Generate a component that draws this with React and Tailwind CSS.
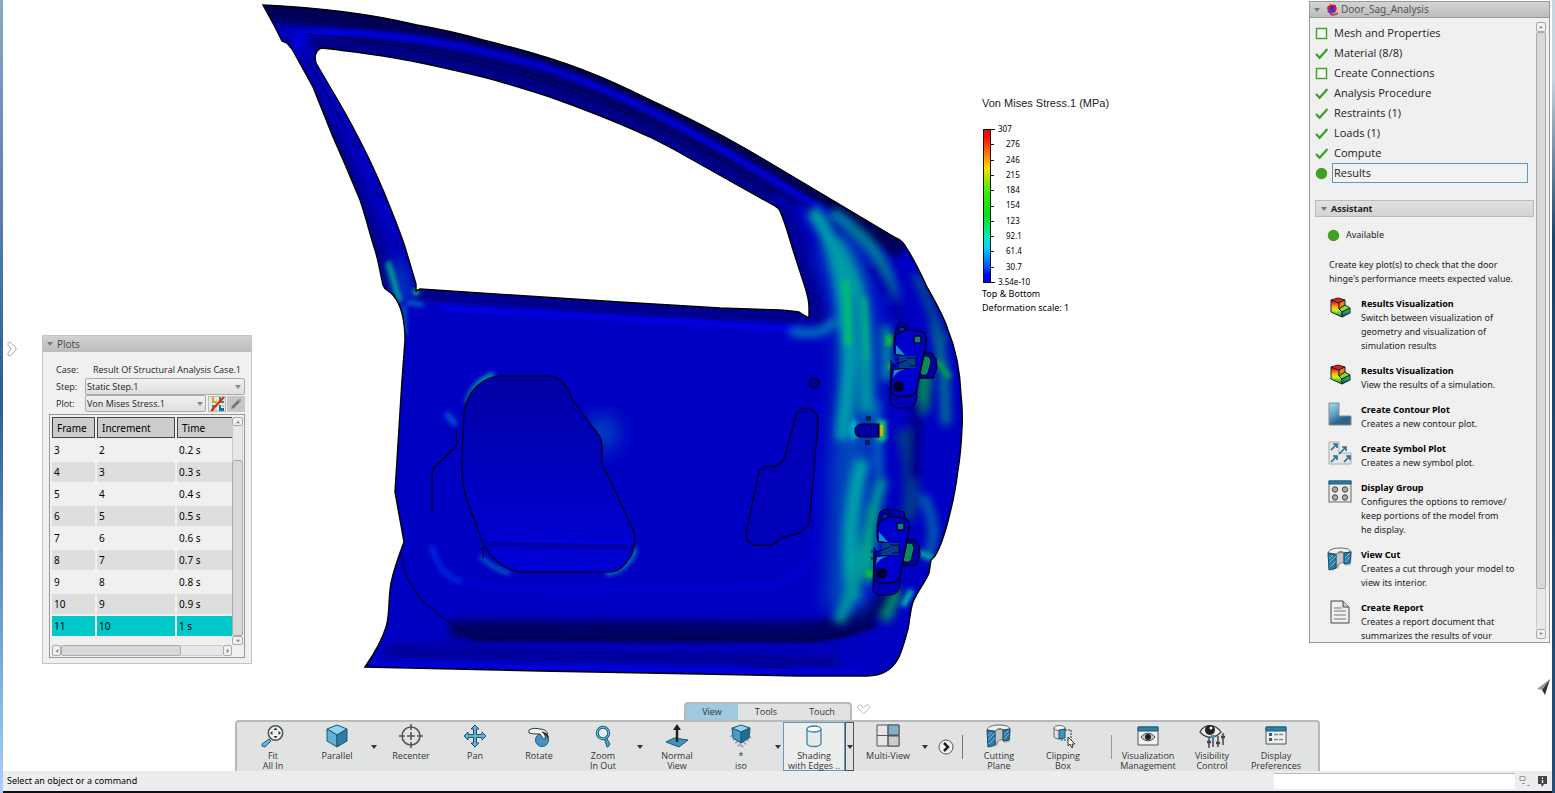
import { useState } from "react";

const frames = [
  { frame: 3, increment: 2, time: "0.2 s" },
  { frame: 4, increment: 3, time: "0.3 s" },
  { frame: 5, increment: 4, time: "0.4 s" },
  { frame: 6, increment: 5, time: "0.5 s" },
  { frame: 7, increment: 6, time: "0.6 s" },
  { frame: 8, increment: 7, time: "0.7 s" },
  { frame: 9, increment: 8, time: "0.8 s" },
  { frame: 10, increment: 9, time: "0.9 s" },
  { frame: 11, increment: 10, time: "1 s" },
];

const steps = [
  { label: "Mesh and Properties", state: "todo" },
  { label: "Material (8/8)", state: "done" },
  { label: "Create Connections", state: "todo" },
  { label: "Analysis Procedure", state: "done" },
  { label: "Restraints (1)", state: "done" },
  { label: "Loads (1)", state: "done" },
  { label: "Compute", state: "done" },
  { label: "Results", state: "current" },
];

const legend = ["307", "276", "246", "215", "184", "154", "123", "92.1", "61.4", "30.7", "3.54e-10"];

const DOOR =
  "M263 5 C330 8 375 15 417 25 C440 29 462 34 483 40 C520 49 552 58 583 70 C607 79 630 90 650 100 C685 116 716 132 748 150 L896 238 Q903 241 907 249 C915 261 921 274 927 287 C936 303 944 317 948 330 C955 347 960 370 961 395 Q963 412 962 428 Q961 452 958 470 Q955 494 950 513 C946 530 941 546 935 556 L931 560 L929 573 C925 583 918 590 913 602 C910 611 910 619 908 629 C905 640 903 648 899 657 C892 671 881 676 867 676 L800 676 L700 674 L540 671 L365 667 C374 654 382 641 386 627 C390 615 388 600 391 583 C394 569 399 555 404 542 L395 492 L402 380 L405 340 Q405 325 402 313 Q399 302 393 295 C389 290 385 291 383 285 C380 272 378 258 374 247 C369 231 365 214 360 200 C351 178 342 157 333 137 L313 87 L292 49 L287 43 L282 41 L275 27 Z";
const WINDOW =
  "M416 284 C411 267 408 257 405 247 C398 226 390 207 383 190 C375 171 367 154 358 137 C349 119 339 102 330 87 L316 63 Q313 52 321 48 C342 50 362 53 383 56 C417 61 450 69 483 77 C506 83 528 90 550 97 C584 109 617 122 650 137 L675 150 L775 206 Q779 208 780 211 C786 225 789 237 793 250 L805 287 Q809 300 809 307 L809 318 Q803 315 799 312 Q792 311 780 310 L720 308 L620 302 L420 289 L416 291 Z";

function Caret({ className = "" }) {
  return (
    <svg className={className} width="6" height="4" viewBox="0 0 6 4" aria-hidden="true">
      <path d="M0 0h6L3 4z" fill="currentColor" />
    </svg>
  );
}

// The two hinges share one shape
function Hinge({ transform }) {
  return (
    <g transform={transform} stroke="#000020" strokeWidth="1">
      <path d="M891 360 L890 400 Q890 408 899 408 L908 408 Q916 407 917 397 L917 388" fill="#0000b4" />
      <path d="M894 340 L896 328 Q897 322 903 323 Q908 324 908 333" fill="#0000a0" />
      <circle cx="902" cy="330" r="3" fill="#0030a0" />
      <path d="M923 352 L931 353 L936 359 L937 368 L933 378 L920 378 Z" fill="#0000a8" strokeWidth="1.4" />
      <path d="M924 356 Q931 355 931 362 L928 373 Q926 377 920 374 Z" fill="#078a60" />
      <path d="M896 336 Q902 329 912 330 L920 331 Q927 332 926 341 L917 389 Q915 396 907 396 L897 396 Q890 395 891 386 L892 370 L907 368 L909 358 L895 354 Q893 343 896 336 Z" fill="#0000cc" strokeWidth="1.4" />
      <path d="M896 345 L905 355 L896 354 Z M893 378 Q896 371 906 369 L894 370 Z" fill="#1490c8" stroke="none" />
      <path d="M899 356 h17 v12 h-17 z" fill="#063c8c" stroke="none" />
      <path d="M907 358 h9 v8 h-7 M891 366 l16 -6" fill="none" />
      <rect x="914" y="336" width="7" height="7" rx="1" fill="#0c7c90" strokeWidth="1.5" />
      <rect x="894" y="382" width="9" height="9" rx="2" fill="#00001c" />
      <circle cx="899" cy="387" r="2" fill="#000070" />
    </g>
  );
}

function DoorModel() {
  return (
    <svg className="min-w-0 max-w-[720px] flex-1 self-start" viewBox="252 0 720 680" role="img" aria-label="Door stress result">
      <defs>
        <clipPath id="doorClip">
          <path d={`${DOOR} ${WINDOW}`} clipRule="evenodd" />
        </clipPath>
        <filter id="b2" x="-50%" y="-50%" width="200%" height="200%"><feGaussianBlur stdDeviation="2" /></filter>
        <filter id="b4" x="-50%" y="-50%" width="200%" height="200%"><feGaussianBlur stdDeviation="4" /></filter>
        <filter id="b8" x="-80%" y="-80%" width="260%" height="260%"><feGaussianBlur stdDeviation="9" /></filter>
        <linearGradient id="pocket" x1="0" y1="0" x2="0" y2="1">
          <stop offset="0" stopColor="#0000a4" />
          <stop offset="0.6" stopColor="#0000c4" />
          <stop offset="1" stopColor="#0000d4" />
        </linearGradient>
      </defs>

      <g clipPath="url(#doorClip)">
        <rect x="252" y="0" width="720" height="680" fill="#0000c3" />

        {/* window frame */}
        <g fill="none" filter="url(#b4)">
          <path d="M262 8 C420 20 560 55 700 128 L905 246" stroke="#000054" strokeWidth="28" />
          <path d="M310 42 C420 45 600 85 775 198" stroke="#000082" strokeWidth="18" />
          <path d="M284 40 C320 100 370 210 390 290" stroke="#00008a" strokeWidth="14" />
          <path d="M302 50 C340 120 385 210 402 285" stroke="#0000bc" strokeWidth="10" />
          <path d="M778 205 Q806 270 816 325" stroke="#000098" strokeWidth="26" />
        </g>
        <path d="M296 62 Q290 36 312 32 C400 32 470 46 540 66 C640 98 720 148 800 196 L850 226" fill="none" stroke="#0000e0" strokeWidth="7" filter="url(#b2)" />

        {/* belt line */}
        <g fill="none" filter="url(#b2)">
          <path d="M416 294 L620 308 L800 317" stroke="#00008c" strokeWidth="13" />
          <path d="M440 308 L620 318 L800 330" stroke="#0000ea" strokeWidth="5" />
        </g>

        {/* lower sill */}
        <g fill="none">
          <g filter="url(#b4)">
            <path d="M450 629 L800 631 Q870 628 895 590" stroke="#000064" strokeWidth="19" />
            <path d="M385 652 L840 662" stroke="#000088" strokeWidth="9" />
            <path d="M395 643 L860 647" stroke="#0000b4" strokeWidth="6" />
          </g>
          <path d="M470 638 L800 639 Q840 639 875 624" stroke="#000030" strokeWidth="4" filter="url(#b2)" />
          <path d="M372 664 L860 673" stroke="#0000e2" strokeWidth="5" filter="url(#b2)" />
          <path d="M432 540 Q434 582 480 584 C560 596 600 590 640 590 L780 584 Q812 570 815 545 L818 400" stroke="#0000d8" strokeWidth="4" filter="url(#b2)" />
          <path d="M401 548 Q402 580 425 603 Q450 625 468 634 Q478 638 500 638" stroke="#000050" strokeWidth="1.4" />
        </g>

        {/* stress around the hinge pillar */}
        <g fill="none">
          <g filter="url(#b8)">
            <path d="M835 240 C870 320 855 400 850 480 Q850 560 845 610" stroke="#0046bc" strokeWidth="40" />
            <path d="M405 300 L395 262" stroke="#0070b0" strokeWidth="9" />
            <circle cx="602" cy="433" r="18" fill="#003cc0" />
          </g>
          <g filter="url(#b4)">
            <path d="M812 210 C846 255 842 300 848 335 C852 370 846 400 842 440" stroke="#009cac" strokeWidth="15" />
            <path d="M832 212 C872 242 886 260 894 300" stroke="#00809c" strokeWidth="12" />
            <path d="M834 240 C862 285 867 310 866 412" stroke="#0098a4" strokeWidth="13" />
            <path d="M862 460 C850 510 846 555 854 600" stroke="#00a4a8" strokeWidth="14" />
            <path d="M882 478 C868 530 864 570 838 622" stroke="#00989c" strokeWidth="12" />
            <path d="M926 368 L922 412" stroke="#008c50" strokeWidth="13" />
            <path d="M934 320 L944 372 L946 425" stroke="#007c90" strokeWidth="9" />
            <path d="M886 326 L887 380" stroke="#008ca0" strokeWidth="10" />
            <path d="M922 495 Q942 530 926 560" stroke="#0068ac" strokeWidth="9" />
            <path d="M902 430 C915 470 912 500 908 520" stroke="#003a88" strokeWidth="14" />
            <path d="M916 274 L946 345" stroke="#004890" strokeWidth="9" />
            <path d="M872 505 L870 582" stroke="#00a880" strokeWidth="9" />
            <path d="M898 590 L884 620" stroke="#008c70" strokeWidth="12" />
            <path d="M875 400 L879 475" stroke="#0068bc" strokeWidth="9" />
            <path d="M790 331 Q828 338 834 319" stroke="#0088bc" strokeWidth="8" />
            <path d="M872 262 Q892 290 902 320" stroke="#0000a0" strokeWidth="9" />
            <path d="M917 400 L914 480" stroke="#000088" strokeWidth="12" />
          </g>
          <g filter="url(#b2)">
            <path d="M845 280 Q849 305 848 345" stroke="#00bc74" strokeWidth="7" />
            <path d="M864 298 L866 360" stroke="#00a88c" strokeWidth="5" />
            <path d="M889 335 v11 M891 363 v6 M866 574 h8" stroke="#18c828" strokeWidth="6" />
            <path d="M936 360 L950 378" stroke="#009c58" strokeWidth="6" />
            <path d="M903 606 L912 590" stroke="#00b4b4" strokeWidth="6" />
            <path d="M916 552 L934 558" stroke="#00b4a0" strokeWidth="5" />
            <path d="M388 262 L400 302" stroke="#00a894" strokeWidth="5" />
            <path d="M404 306 L405 335" stroke="#0084b0" strokeWidth="3" />
            <path d="M407 302 L424 305" stroke="#0068c8" strokeWidth="4" />
            <circle cx="416" cy="292" r="3" fill="#10d080" />
            <path d="M468 404 Q474 382 494 375" stroke="#0088b8" strokeWidth="7" />
            <path d="M446 413 l10 12" stroke="#0050d0" strokeWidth="6" />
            <path d="M480 556 Q494 570 510 573" stroke="#0060c0" strokeWidth="4" />
            <path d="M606 574 Q628 571 636 548" stroke="#0088b8" strokeWidth="4" />
            <path d="M432 545 Q438 576 462 582" stroke="#0020d8" strokeWidth="6" />
            <path d="M855 421 q-5 9 0 18" stroke="#00b4cc" strokeWidth="6" />
            <rect x="877" y="420" width="9" height="21" fill="#10c878" />
          </g>
          <rect x="879" y="425" width="4" height="11" fill="#c8b400" />
        </g>

        {/* door-panel cut-outs */}
        <g stroke="#000" strokeWidth="1.1">
          <path d="M500 376 L549 376 Q561 377 567 388 L572 399 L598 434 Q602 438 602 446 L602 463 L634 532 Q637 551 626 563 Q620 571 612 572 L520 572 Q497 569 483 543 L468 503 Q461 484 462 455 L464 414 Q466 396 477 386 Q488 376 500 376 Z" fill="url(#pocket)" />
          <path d="M483 543 L633 548" stroke="#0000a4" strokeWidth="5" />
          <path d="M483 540 L633 543" stroke="#0000ec" strokeWidth="2" />
          <path d="M483 546 v13" fill="none" />
          <path d="M456 430 L457 444 Q456 447 450 452 L434 468 Q432 470 432 476 L432 512" fill="none" />
          <path d="M805 408 Q819 409 818 424 L810 515 Q810 529 797 534 L781 538 L774 544 Q773 545 768 545 L754 545 Q745 544 746 532 L759 472 Q761 467 768 467 Q782 467 785 456 L795 418 Q797 409 805 408 Z" fill="#0000b8" />
          <circle cx="814" cy="383" r="5" fill="#0000a0" />
          <path d="M879 424 L863 424 Q855 424 855 431 Q855 437 863 437 L879 437 Z" fill="#0000a4" />
          <rect x="867" y="417" width="3" height="3" fill="none" />
          <rect x="866" y="441" width="3" height="3" fill="none" />
        </g>

        <Hinge />
        <g>
          <path d="M880 530 L881 514 Q884 508 889 509 L904 512 Q905 516 904 524" fill="#0000a8" stroke="#000030" />
          <Hinge transform="translate(-17 187)" />
        </g>

        {/* seams */}
        <g fill="none" stroke="#000028" strokeWidth="0.8">
          <path d="M305 35 C430 38 600 78 755 176 M340 38 C450 50 620 92 755 181" />
          <path d="M766 184 l31 18 M766 187 l31 19" />
          <path d="M308 60 Q330 100 345 126 L346 131" />
          <path d="M330 128 L352 170" strokeDasharray="2 3" />
          <circle cx="358" cy="142" r="5" />
          <circle cx="381" cy="191" r="5" />
          <circle cx="401" cy="244" r="5" />
          <path d="M806 290 l15 9 M710 319 h8 M754 665 l10 2 28 1" />
          <path d="M813 520 v14 M872 550 v12" strokeDasharray="3 4" />
        </g>
      </g>

      <path d={DOOR} fill="none" stroke="#000" strokeWidth="1.4" />
      <path d={WINDOW} fill="none" stroke="#000" strokeWidth="1.4" />
    </svg>
  );
}

function StressLegend() {
  return (
    <section className="mt-[96px] ml-[10px] shrink-0 font-['Noto_Sans',sans-serif] text-[8px] text-black">
      <h2 className="font-['Liberation_Sans',Arial,sans-serif] text-[11px] leading-[14px] whitespace-nowrap text-[#222]">
        Von Mises Stress.1 (MPa)
      </h2>
      <div className="mt-[14px] flex gap-[2px]">
        <svg className="mt-1" width="14" height="156" viewBox="0 0 14 156" aria-hidden="true">
          <defs>
            <linearGradient id="scale" x1="0" y1="0" x2="0" y2="1">
              <stop offset="0" stopColor="#f00" />
              <stop offset="0.06" stopColor="#f10" />
              <stop offset="0.25" stopColor="#fd0" />
              <stop offset="0.42" stopColor="#3e0" />
              <stop offset="0.56" stopColor="#00e020" />
              <stop offset="0.7" stopColor="#00f0b0" />
              <stop offset="0.77" stopColor="#00d8ff" />
              <stop offset="0.9" stopColor="#0050ff" />
              <stop offset="0.95" stopColor="#00f" />
            </linearGradient>
          </defs>
          <rect x="1.5" y="1.5" width="7" height="153" fill="url(#scale)" stroke="#111" />
          {legend.map((v, i) => (
            <path key={v} d={`M9 ${Math.round(1 + i * 15.3)}.5h${i % 10 === 0 ? 4 : 3}`} stroke="#111" />
          ))}
        </svg>
        <ol className="flex h-[163px] flex-col justify-between leading-[10px]">
          {legend.map((v, i) => (
            <li key={v} className={i % 10 === 0 ? "" : "pl-2"}>{v}</li>
          ))}
        </ol>
      </div>
      <p className="text-[9px] leading-[14px]">Top &amp; Bottom</p>
      <p className="text-[9px] leading-[14px]">Deformation scale: 1</p>
    </section>
  );
}

function PlotsPanel() {
  const [selected, setSelected] = useState(11);
  return (
    <section className="mb-[38px] w-[210px] shrink-0 self-end border border-[#c4c4c4] bg-[#f0f0f0] font-['Open_Sans',sans-serif] text-[9px] text-[#222]">
      <h2 className="flex h-4 items-center gap-1 bg-linear-to-b from-[#d2d2d2] to-[#bcbcbc] pl-1 text-[10px] text-[#444]">
        <Caret className="text-[#777]" />
        Plots
      </h2>
      <div className="px-[6px] pt-[9px] pb-[5px]">
        <div className="flex h-[17px] items-center pl-[7px]">
          <span className="w-[37px]">Case:</span>
          <span className="whitespace-nowrap">Result Of Structural Analysis Case.1</span>
        </div>
        <div className="flex h-[17px] items-center pl-[7px]">
          <label htmlFor="step" className="w-[29px]">Step:</label>
          <div className="relative flex flex-1">
            <select id="step" className="h-[17px] w-full appearance-none rounded-xs border border-[#aaa] bg-linear-to-b from-[#f2f2f2] to-[#dedede] pl-[1px]">
              <option>Static Step.1</option>
            </select>
            <Caret className="pointer-events-none absolute top-[7px] right-1 text-[#888]" />
          </div>
        </div>
        <div className="flex h-[17px] items-center pl-[7px]">
          <label htmlFor="plot" className="w-[29px]">Plot:</label>
          <div className="relative flex flex-1">
            <select id="plot" className="h-[17px] w-full appearance-none rounded-xs border border-[#aaa] bg-linear-to-b from-[#f2f2f2] to-[#dedede] pl-[1px]">
              <option>Von Mises Stress.1</option>
            </select>
            <Caret className="pointer-events-none absolute top-[7px] right-[3px] text-[#888]" />
          </div>
          <button aria-label="Deactivate plot" className="ml-[2px] flex h-4 w-[18px] items-center justify-center border border-[#bbb] bg-[#e8e8e8]">
            <svg width="15" height="14" viewBox="0 0 15 14">
              <path d="M2 0h2v4h3v2H2z" fill="#d9a520" />
              <path d="M9 0h2v4h3v2H9z" fill="#2aa13a" />
              <path d="M2 8h5v2H4v4H2z" fill="#2aa13a" />
              <path d="M9 8h2v3h3v3H9z" fill="#1668c8" />
              <path d="M1 0h2v2H1zM12 8h2v2h-2zM5 12h2v2H5z" fill="#e8d020" />
              <path d="M14 0L1 14" stroke="#e0281c" strokeWidth="2.200" />
            </svg>
          </button>
          <button aria-label="Edit plot" className="ml-[1px] flex h-4 w-[18px] items-center justify-center bg-[#c6c6c6]">
            <svg width="12" height="12" viewBox="0 0 12 12">
              <path d="M1 11l1-3 6-6 2 2-6 6z" fill="#777" />
              <path d="M8 2l1-1h2v2l-1 1z" fill="#999" />
            </svg>
          </button>
        </div>

        <div className="mt-[2px] border border-[#999] bg-[#f0f0f0] pr-[1px] pb-[1px]">
          <div className="flex">
            <div className="min-w-0 flex-1 overflow-hidden pb-[7px]">
              <table className="w-[188px] table-fixed border-separate border-spacing-x-[2px] border-spacing-y-[2px] text-left font-['Noto_Sans',sans-serif] text-[10px] leading-[18px] text-black">
                <thead>
                  <tr>
                    <th className="h-[21px] w-[43px] border border-[#444] bg-[#ccc] pl-1 font-normal">Frame</th>
                    <th className="w-[78px] border border-[#444] bg-[#ccc] pl-1 font-normal">Increment</th>
                    <th className="border border-[#444] bg-[#ccc] pl-1 font-normal">Time</th>
                  </tr>
                </thead>
                <tbody>
                  {frames.map((f, i) => (
                    <tr
                      key={f.frame}
                      onClick={() => setSelected(f.frame)}
                      className={f.frame === selected ? "bg-[#00c8c8]" : i % 2 ? "bg-[#dedede]" : "bg-[#f0f0f0]"}
                    >
                      <td className="h-5 pl-[2px]">{f.frame}</td>
                      <td className="pl-[2px]">{f.increment}</td>
                      <td className="pl-[2px]">{f.time}</td>
                    </tr>
                  ))}
                </tbody>
              </table>
            </div>
            <div className="flex w-[11px] flex-col pt-[2px] text-[#888]">
              <button aria-label="Scroll up" className="flex h-[9px] items-center justify-center rounded-xs border border-[#aaa]">
                <Caret className="w-1 rotate-180" />
              </button>
              <div className="h-[34px] border-x border-[#ccc] bg-[#e8e8e8]" />
              <div className="flex-1 rounded-xs border border-[#aaa] bg-[#d8d8d8]" />
              <button aria-label="Scroll down" className="flex h-[9px] items-center justify-center rounded-xs border border-[#aaa]">
                <Caret className="w-1" />
              </button>
            </div>
          </div>
          <div className="mr-[11px] ml-[2px] flex h-[11px] text-[#888]">
            <button aria-label="Scroll left" className="flex w-[9px] items-center justify-center rounded-xs border border-[#aaa]">
              <Caret className="w-1 rotate-90" />
            </button>
            <div className="w-[120px] rounded-xs border border-[#aaa] bg-[#d8d8d8]" />
            <div className="flex-1 border-y border-[#ccc] bg-[#e8e8e8]" />
            <button aria-label="Scroll right" className="flex w-[9px] items-center justify-center rounded-xs border border-[#aaa]">
              <Caret className="w-1 -rotate-90" />
            </button>
          </div>
        </div>
      </div>
    </section>
  );
}

function StepIcon({ state }) {
  return (
    <svg width="13" height="13" viewBox="0 0 13 13" className="shrink-0" aria-hidden="true">
      {state === "todo" && <rect x="1.5" y="1.5" width="10" height="10" fill="#f6faf4" stroke="#3fa124" strokeWidth="1.4" />}
      {state === "done" && <path d="M1 7l3.6 3.8L12.4 2" fill="none" stroke="#3fa124" strokeWidth="2.200" />}
      {state === "current" && <circle cx="6.5" cy="6.5" r="5.7" fill="#3fa124" />}
    </svg>
  );
}

function ResultIcon() {
  return (
    <svg width="24" height="24" viewBox="0 0 24 24">
      <defs>
        <linearGradient id="rain" x1="0" y1="0" x2="0" y2="1">
          <stop offset="0.1" stopColor="#f01010" />
          <stop offset="0.4" stopColor="#ffb010" />
          <stop offset="0.6" stopColor="#d8f010" />
          <stop offset="0.85" stopColor="#20c830" />
          <stop offset="1" stopColor="#10a060" />
        </linearGradient>
        <linearGradient id="rainSide" x1="0" y1="0" x2="0" y2="1">
          <stop offset="0" stopColor="#30d830" />
          <stop offset="0.5" stopColor="#10a070" />
          <stop offset="1" stopColor="#1030b0" />
        </linearGradient>
      </defs>
      <g stroke="#222" strokeLinejoin="round">
        <path d="M3 4l8 3v6l3 3v5L3 16z" fill="url(#rain)" />
        <path d="M3 4l7-2 7 2-6 3z" fill="#e81c14" />
        <path d="M11 7l6-3v5l-6 4z" fill="#f08010" />
        <path d="M11 13l6-4 5 3-8 4z" fill="#88e028" />
        <path d="M14 16l8-4v5l-8 4z" fill="url(#rainSide)" />
      </g>
    </svg>
  );
}

function CutIcon() {
  return (
    <svg width="26" height="24" viewBox="0 0 26 24">
      <path d="M3 7C3 3 9 2 14 2s10 1 11 4l-1 12-6 1-1-9-4 1-1 10-7 3z" fill="#888" opacity="0.5" />
      <path d="M1 6C2 2 8 1 13 1c6 0 10 1 11 4l-7 1c-1-2-6-2-7 1z" fill="#f0f0f0" stroke="#666" />
      <path d="M9 8c1-3 6-3 8-2v10c-2-1-5 0-8 5z" fill="#c4c4c4" stroke="#777" />
      <path d="M1 6l8 2v13l-7 2z" fill="#2b7ca8" stroke="#174a68" />
      <path d="M17 6l7-1-1 11-6 1z" fill="#2b7ca8" stroke="#174a68" />
      <path d="M2 12l4-4M2 16l7-7M3 20l6-6M18 11l5-5M18 15l5-5" stroke="#8cc8e4" strokeWidth="0.8" />
    </svg>
  );
}

const assistantIcons = {
  result: <ResultIcon />,
  contour: (
    <svg width="24" height="24" viewBox="0 0 24 24">
      <defs>
        <linearGradient id="contour" x1="0" y1="0" x2="0.6" y2="1">
          <stop offset="0" stopColor="#a0dcf4" />
          <stop offset="0.5" stopColor="#5c9cc0" />
          <stop offset="0.8" stopColor="#2b6488" />
        </linearGradient>
      </defs>
      <path d="M1 1h10v13h12v9H1z" fill="url(#contour)" stroke="#888" />
    </svg>
  ),
  symbol: (
    <svg width="24" height="24" viewBox="0 0 24 24" fill="none">
      <path d="M1 1h10v11h12v11H1z" fill="#e6e6e6" stroke="#aaa" />
      <path d="M3 9l6-6M5 3h4v4M11 13l7-7M14 6h4v4M3 21l6-6M5 15h4v4M16 21l6-6M18 15h4v4" stroke="#2b6f94" strokeWidth="1.7" />
    </svg>
  ),
  group: (
    <svg width="24" height="24" viewBox="0 0 24 24">
      <rect x="1" y="1" width="22" height="21" fill="#ececec" stroke="#666" />
      <path d="M1 1h22v3H1z" fill="#2b84a8" stroke="#1c5674" />
      <g fill="#aaa" stroke="#444">
        <circle cx="7" cy="9.500" r="2.700" />
        <circle cx="17" cy="9.500" r="2.700" />
        <circle cx="7" cy="17.500" r="2.700" />
        <circle cx="17" cy="17.500" r="2.700" />
      </g>
    </svg>
  ),
  cut: <CutIcon />,
  report: (
    <svg width="24" height="24" viewBox="0 0 24 24">
      <path d="M3 1h12l6 6v16H3z" fill="#eee" stroke="#444" />
      <path d="M15 1v6h6" fill="#ccc" stroke="#444" />
      <path d="M6 8h8M6 11h12M6 15h12M6 19h12" stroke="#777" />
    </svg>
  ),
};

const assistantItems = [
  { icon: "result", title: "Results Visualization", lines: ["Switch between visualization of", "geometry and visualization of", "simulation results"] },
  { icon: "result", title: "Results Visualization", lines: ["View the results of a simulation."] },
  { icon: "contour", title: "Create Contour Plot", lines: ["Creates a new contour plot."] },
  { icon: "symbol", title: "Create Symbol Plot", lines: ["Creates a new symbol plot."] },
  { icon: "group", title: "Display Group", lines: ["Configures the options to remove/", "keep portions of the model from", "he display."] },
  { icon: "cut", title: "View Cut", lines: ["Creates a cut through your model to", "view its interior."] },
  { icon: "report", title: "Create Report", lines: ["Creates a report document that", "summarizes the results of your"] },
];

function AssistantPanel() {
  return (
    <aside className="mt-[1px] flex min-h-0 w-[241px] flex-1 flex-col border border-[#999] bg-[#f0f0f0] text-[#222]">
      <h2 className="flex h-4 shrink-0 items-center border-b border-[#999] bg-linear-to-b from-[#d4d4d4] to-[#bcbcbc] pl-1 text-[10px] text-[#555]">
        <Caret className="text-[#777]" />
        <svg className="mr-[2px] ml-[6px]" width="13" height="13" viewBox="0 0 13 13" aria-hidden="true">
          <path d="M1 5l1-2 1 0 1-2 2 1 1-1 1 1 2 0 0 2 1 1-1 3H2z" fill="#e01830" />
          <circle cx="6" cy="5" r="2" fill="#2030d0" />
          <path d="M1 8l8-1 1 2-6 2z" fill="#3040e0" />
          <path d="M4 10c3 1 6 1 8-1v2c-3 2-6 2-8 1z" fill="#e03030" />
        </svg>
        Door_Sag_Analysis
      </h2>
      <div className="flex min-h-0 flex-1 pr-[3px] pb-[3px]">
        <div className="min-w-0 flex-1 overflow-hidden pt-[5px]">
          <ol className="pl-[5px] font-['Open_Sans',sans-serif] text-[11px]">
            {steps.map((s) => (
              <li key={s.label} className="flex h-5 items-center gap-1">
                <StepIcon state={s.state} />
                <button
                  className={
                    s.state === "current"
                      ? "mr-2 h-5 flex-1 border border-[#5b9cc0] bg-[#f2f2f2] pl-[1px] text-left"
                      : "h-5 pl-[2px] text-left"
                  }
                >
                  {s.label}
                </button>
              </li>
            ))}
          </ol>
          <h3 className="mt-[17px] mr-[2px] ml-[5px] flex h-[17px] items-center gap-1 border border-[#bbb] bg-linear-to-b from-[#e2e2e2] to-[#d4d4d4] pl-[5px] text-[9px] font-bold">
            <Caret className="text-[#777]" />
            Assistant
          </h3>
          <div className="pl-[17px] text-[9px]">
            <p className="mt-3 flex h-3 items-center gap-[6px]">
              <StepIcon state="current" />
              Available
            </p>
            <p className="mt-[17px] pl-[2px] leading-[14px]">
              Create key plot(s) to check that the door
              <br />
              hinge's performance meets expected value.
            </p>
            <ul className="mt-[10px] flex flex-col gap-[10px]">
              {assistantItems.map((item, i) => (
                <li key={i} className="flex gap-2">
                  <div className="flex w-[26px] shrink-0 justify-center">
                    <div>{assistantIcons[item.icon]}</div>
                  </div>
                  <div className="whitespace-nowrap">
                    <a href="#" className="block leading-[15px] font-bold text-black">{item.title}</a>
                    {item.lines.map((line) => (
                      <p key={line} className="leading-[14px]">{line}</p>
                    ))}
                  </div>
                </li>
              ))}
            </ul>
          </div>
        </div>
        <div className="flex w-[10px] shrink-0 flex-col pt-1 text-[#888]">
          <button aria-label="Scroll up" className="flex h-[10px] items-center justify-center rounded-xs border border-[#aaa]">
            <Caret className="w-1 rotate-180" />
          </button>
          <div className="flex-14 rounded-xs border border-[#aaa] bg-[#d8d8d8]" />
          <div className="flex-1 border-x border-[#ccc] bg-[#e8e8e8]" />
          <button aria-label="Scroll down" className="flex h-[10px] items-center justify-center rounded-xs border border-[#aaa]">
            <Caret className="w-1" />
          </button>
        </div>
      </div>
    </aside>
  );
}

const toolIcons = {
  fit: (
    <svg width="24" height="24" viewBox="0 0 24 24" fill="none">
      <path d="M8 15l2 2-6 6-3-1v-2z" fill="#5eb4dc" stroke="#1f5f84" />
      <circle cx="14.500" cy="9" r="7.200" fill="#eef2f3" stroke="#555" strokeWidth="1.600" />
      <path d="M14.500 3.500l2 2.500h-4zM14.500 14.500l2-2.500h-4zM9 9l2.500-2v4zM20 9l-2.500-2v4z" fill="#333" />
    </svg>
  ),
  cube: (
    <svg width="24" height="24" viewBox="0 0 24 24" stroke="#1c5474" strokeLinejoin="round">
      <path d="M12 1l10 4-10 6L2 5z" fill="#8cd4f4" />
      <path d="M2 5l10 6v12L2 17z" fill="#62b0d8" />
      <path d="M22 5l-10 6v12l10-6z" fill="#2f7ca4" />
    </svg>
  ),
  recenter: (
    <svg width="24" height="24" viewBox="0 0 24 24" fill="none" stroke="#555" strokeWidth="1.600">
      <circle cx="12" cy="12" r="9" />
      <path d="M12 0v6M12 18v6M0 12h6M18 12h6M12 8v8M8 12h8" />
    </svg>
  ),
  pan: (
    <svg width="24" height="24" viewBox="0 0 24 24" fill="#5eb4dc" stroke="#1f4f70" strokeLinejoin="round">
      <path d="M12 1l4 4h-2.500v5.500H19V8l4 4-4 4v-2.500h-5.500V19H16l-4 4-4-4h2.500v-5.500H5V16l-4-4 4-4v2.500h5.500V5H8z" />
    </svg>
  ),
  rotate: (
    <svg width="24" height="24" viewBox="0 0 24 24">
      <circle cx="15" cy="16" r="6.500" fill="#3f94c0" stroke="#1f5f84" />
      <path d="M2 6c3-2 7-2 11-1 4 0 7 2 8 5-1 1-2 0-3-1l-3-1c2 1 4 4 3 7-2 1-3-3-5-5-4 0-7 0-11-1z" fill="#f2f2f2" stroke="#333" />
      <path d="M17 9c2 1 4 3 4 5" fill="none" stroke="#222" strokeWidth="1.500" />
    </svg>
  ),
  zoom: (
    <svg width="24" height="24" viewBox="0 0 24 24">
      <path d="M13 14l2-1 4 7-2 3h-1z" fill="#4f9cc4" stroke="#1f5f84" />
      <circle cx="12" cy="9" r="5.700" fill="#e4f2f8" stroke="#1f5f84" strokeWidth="3" />
      <circle cx="12" cy="9" r="5.700" fill="none" stroke="#7cc4e4" />
    </svg>
  ),
  normal: (
    <svg width="24" height="24" viewBox="0 0 24 24">
      <path d="M1 18l8-4 14 2-9 7z" fill="#3f94c0" stroke="#1c5474" />
      <path d="M12 18V4" stroke="#222" strokeWidth="2.500" />
      <path d="M12 0l4 6H8z" fill="#222" />
    </svg>
  ),
  iso: (
    <svg width="26" height="26" viewBox="0 0 26 26">
      <path d="M3 12l10 12 10-12" fill="none" stroke="#aaa" strokeWidth="4" strokeDasharray="2 2" />
      <g stroke="#1c5474">
        <path d="M13 2l9 3-9 4-9-4z" fill="#8cd4f4" />
        <path d="M4 5l9 4v11l-8-5z" fill="#4a9cc8" />
        <path d="M22 5l-9 4v11l8-5z" fill="#246c94" />
      </g>
    </svg>
  ),
  shading: (
    <svg width="24" height="24" viewBox="0 0 24 24">
      <path d="M5 5v14c0 2 3 3.500 7 3.500s7-1.500 7-3.500V5" fill="#e6e8ea" stroke="#3f84a8" strokeWidth="1.300" />
      <ellipse cx="12" cy="5" rx="7" ry="3" fill="#fff" stroke="#3f84a8" strokeWidth="1.300" />
    </svg>
  ),
  multi: (
    <svg width="24" height="24" viewBox="0 0 24 24">
      <path d="M1 1h22v21H1z" fill="#e6e6e6" stroke="#555" />
      <path d="M12 1h11v10H12z" fill="#7cb0cc" stroke="#555" />
      <path d="M12 12h11v10H12z" fill="#ccc" stroke="#555" />
      <path d="M12 1v21M1 11.500h22" stroke="#555" />
    </svg>
  ),
  cut: <CutIcon />,
  clip: (
    <svg width="24" height="24" viewBox="0 0 24 24">
      <path d="M3 4v9c2 2 5 2 6 2V6h5V4" fill="#e0e0e0" stroke="#666" />
      <ellipse cx="8.500" cy="4" rx="5.500" ry="2.500" fill="#f4f4f4" stroke="#666" />
      <path d="M8 6l6-1v9l-6 1z" fill="#3f94c0" stroke="#1c5474" />
      <path d="M14 6h6v10H9" fill="none" stroke="#333" strokeDasharray="2 1" />
      <path d="M17 13v9l2-2 2 4 1-1-1-3h3z" fill="#fff" stroke="#333" />
    </svg>
  ),
  vismgmt: (
    <svg width="24" height="24" viewBox="0 0 24 24">
      <path d="M2 3h20v18H2z" fill="#f0f0f0" stroke="#555" />
      <path d="M2 3h20v4H2z" fill="#2b84a8" stroke="#1c5674" />
      <path d="M5 13c4-5 10-5 14 0-4 5-10 5-14 0z" fill="#ccc" stroke="#444" />
      <circle cx="12" cy="13" r="3" fill="#222" />
    </svg>
  ),
  visctrl: (
    <svg width="26" height="24" viewBox="0 0 26 24">
      <path d="M1 8C5 0 16-1 22 8c-6 7-15 7-21 0z" fill="#ececec" stroke="#444" strokeWidth="1.300" />
      <circle cx="11" cy="6" r="5" fill="#222" />
      <circle cx="12" cy="4" r="1.500" fill="#fff" />
      <path d="M10 14v10M14 11v12M19 12v11M24 9v12" stroke="#444" strokeWidth="1.500" />
      <path d="M8 18h4M17 19h4M22 13h4" stroke="#444" strokeWidth="2.500" />
      <path d="M12 11h4v3h-4z" fill="#3f94c0" />
    </svg>
  ),
  prefs: (
    <svg width="24" height="24" viewBox="0 0 24 24">
      <path d="M2 3h20v17H2z" fill="#f0f0f0" stroke="#555" />
      <path d="M2 3h20v4H2z" fill="#2b84a8" stroke="#1c5674" />
      <path d="M5 9h3v3H5zM5 14h3v3H5z" fill="#1c6488" />
      <path d="M10 10.500h10M10 15.500h10" stroke="#888" strokeWidth="1.500" strokeDasharray="4 1" />
    </svg>
  ),
};

function Tool({ icon, lines, className = "w-16" }) {
  return (
    <button className={`flex shrink-0 flex-col items-center justify-start text-[9px] leading-[10px] text-[#333] ${className}`}>
      <span className="flex h-[29px] shrink-0 items-center pb-[1px]">{toolIcons[icon]}</span>
      {lines.map((l) => (
        <span key={l} className="whitespace-nowrap">{l}</span>
      ))}
    </button>
  );
}

function DropArrow({ label }) {
  return (
    <button aria-label={label} className="flex w-[10px] shrink-0 items-center justify-center text-[#333]">
      <Caret />
    </button>
  );
}

function ActionBar() {
  const [tab, setTab] = useState("View");
  return (
    <div className="shrink-0 font-['Open_Sans',sans-serif]">
      <div className="flex justify-center">
        <div role="tablist" className="flex h-[18px] rounded-t-sm border-2 border-b-0 border-[#b8baba] bg-[#e1e3e2] text-[9px] text-[#333]">
          {["View", "Tools", "Touch"].map((t) => (
            <button
              key={t}
              role="tab"
              aria-selected={tab === t}
              onClick={() => setTab(t)}
              className={tab === t ? "w-[52px] bg-[#a0c8de]" : "w-[56px]"}
            >
              {t}
            </button>
          ))}
        </div>
        <button aria-label="Collapse action bar" className="ml-1 pb-1">
          <svg width="15" height="11" viewBox="0 0 15 11" fill="none">
            <path d="M1 3l2-2h2l2.500 3L10 1h2l2 2-6.500 7z" stroke="#bbb" />
          </svg>
        </button>
      </div>
      <div className="flex justify-center">
        <div className="flex h-[51px] overflow-hidden rounded-t-sm border-2 border-b-0 border-[#b8baba] bg-[#e1e3e2] px-1">
          <Tool icon="fit" lines={["Fit", "All In"]} />
          <Tool icon="cube" lines={["Parallel"]} />
          <DropArrow label="Projection options" />
          <Tool icon="recenter" lines={["Recenter"]} />
          <Tool icon="pan" lines={["Pan"]} />
          <Tool icon="rotate" lines={["Rotate"]} />
          <Tool icon="zoom" lines={["Zoom", "In Out"]} />
          <DropArrow label="Zoom options" />
          <Tool icon="normal" lines={["Normal", "View"]} />
          <Tool icon="iso" lines={["*", "iso"]} />
          <DropArrow label="View options" />
          <div className="mr-[2px] flex shrink-0">
            <Tool
              icon="shading"
              lines={["Shading", "with Edges .."]}
              className="w-[62px] bg-[#eceeee] ring-1 ring-[#5b9cc0] ring-inset"
            />
            <button aria-label="Shading options" className="flex w-[9px] items-center justify-center border border-[#555] text-[#333]">
              <Caret />
            </button>
          </div>
          <Tool icon="multi" lines={["Multi-View"]} />
          <DropArrow label="Layout options" />
          <button aria-label="More tools" className="mx-2 self-center">
            <svg width="16" height="16" viewBox="0 0 16 16" fill="none">
              <circle cx="8" cy="8" r="7" fill="#f4f4f4" stroke="#555" />
              <path d="M6 4l4 4-4 4" stroke="#222" strokeWidth="2.500" />
            </svg>
          </button>
          <div className="mr-1 h-6 w-px self-center bg-[#777]" />
          <Tool icon="cut" lines={["Cutting", "Plane"]} />
          <Tool icon="clip" lines={["Clipping", "Box"]} />
          <div className="mr-1 ml-4 h-6 w-px self-center bg-[#999]" />
          <Tool icon="vismgmt" lines={["Visualization", "Management"]} />
          <Tool icon="visctrl" lines={["Visibility", "Control"]} />
          <Tool icon="prefs" lines={["Display", "Preferences"]} />
          <div className="w-[6px]" />
        </div>
      </div>
    </div>
  );
}

function StatusBar() {
  return (
    <footer className="flex h-[22px] shrink-0 items-center border-b-2 border-[#101014] bg-[#ededed] pl-1 text-[9px] text-black">
      <label htmlFor="command" className="flex-1">Select an object or a command</label>
      <input id="command" className="h-4 w-[241px] border-t border-[#bbb] bg-white px-1 outline-none" />
      <svg className="ml-1" width="12" height="12" viewBox="0 0 12 12" fill="none" stroke="#999">
        <path d="M1 1.500h5v4H1zM8 10.500h3M3 8.500h3" />
      </svg>
      <button aria-label="Notifications" className="mr-1 ml-[6px]">
        <svg width="11" height="12" viewBox="0 0 11 12">
          <path d="M1 1h9v8H7l-2 3-1-3H1z" fill="#444" />
          <path d="M5.500 2.500v1.500M5.500 5v3" stroke="#fff" strokeWidth="1.300" />
        </svg>
      </button>
    </footer>
  );
}

export default function App() {
  return (
    <div className="flex h-screen bg-white font-['Noto_Sans',sans-serif]">
      <div className="w-[3px] shrink-0 bg-linear-to-b from-[#8aa8c8] via-[#2d5c94] to-[#a8d0f8]" />
      <div className="flex min-w-0 flex-1 flex-col">
        <main className="flex min-h-0 flex-1">
          <button aria-label="Open tree" className="mt-[341px] w-[39px] self-start pl-[3px]">
            <svg width="12" height="16" viewBox="0 0 12 16" fill="none">
              <path d="M2 2l2-1 6 6v2l-6 6-2-1v-2l3-4-3-4z" stroke="#aaa" />
            </svg>
          </button>
          <PlotsPanel />
          <DoorModel />
          <StressLegend />
          <div className="ml-auto flex shrink-0 flex-col pr-[2px]">
            <AssistantPanel />
            <svg className="mt-[36px] mb-[7px] self-end" width="13" height="16" viewBox="0 0 13 16" aria-hidden="true">
              <path d="M13 0L0 10l5 1z" fill="#999" />
              <path d="M13 0L5 11l3 5z" fill="#333" />
            </svg>
          </div>
        </main>
        <ActionBar />
        <StatusBar />
      </div>
      <div className="w-[3px] shrink-0 bg-linear-to-b from-[#c8d4de] from-10% via-[#1d4466] via-30% to-[#274e70]" />
    </div>
  );
}
